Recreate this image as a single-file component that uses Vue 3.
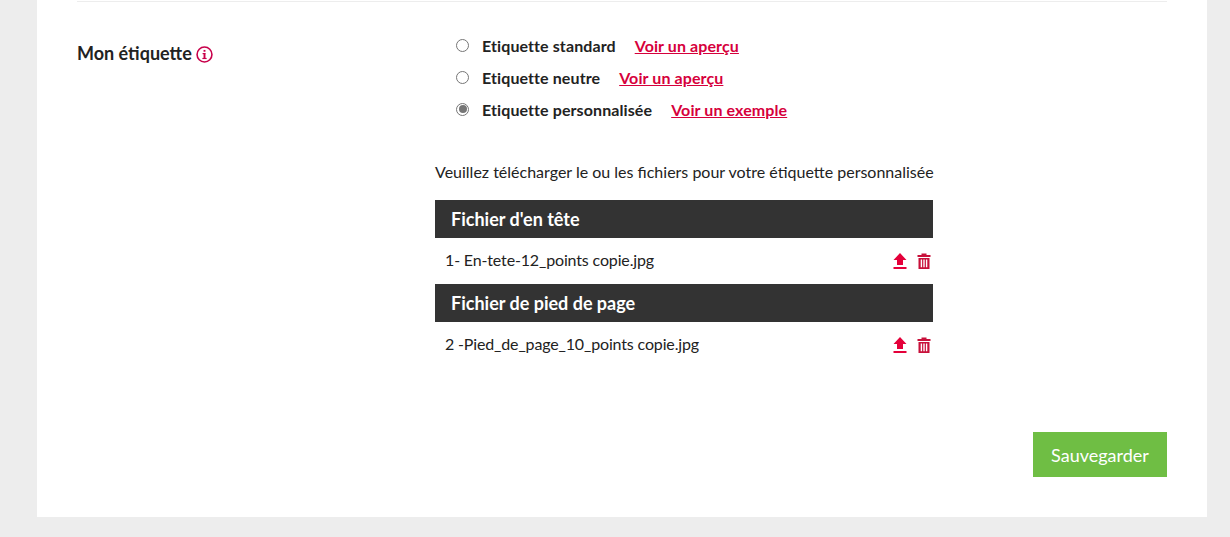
<template>
  <div class="page">
    <div class="card">
      <div class="settings-row">
        <div class="label-col">
          <span class="label-text">Mon étiquette</span>
          <svg class="info-icon" viewBox="0 0 16 16" width="17" height="17">
            <circle cx="8" cy="8" r="7" fill="none" stroke="#c8004b" stroke-width="1.5" />
            <rect x="7.1" y="6.8" width="1.8" height="5" fill="#c8004b" />
            <rect x="6.2" y="6.6" width="2.7" height="1.1" fill="#c8004b" />
            <rect x="6" y="11.2" width="4" height="1.1" fill="#c8004b" />
            <rect x="7.1" y="3.7" width="1.8" height="1.7" fill="#c8004b" />
          </svg>
        </div>
        <div class="content-col">
          <div class="options">
            <label v-for="option in options" :key="option.name" class="option">
              <span class="radio" :class="{ checked: option.checked }"></span>
              <span class="option-name">{{ option.name }}</span>
              <a class="option-link" href="#">{{ option.link }}</a>
            </label>
          </div>
          <p class="hint">Veuillez télécharger le ou les fichiers pour votre étiquette personnalisée</p>
          <div class="files">
            <div v-for="file in files" :key="file.title" class="file-block">
              <div class="file-title">{{ file.title }}</div>
              <div class="file-row">
                <span class="file-name">{{ file.name }}</span>
                <div class="file-actions">
                  <svg viewBox="0 0 16 16" width="16" height="16">
                    <path d="M8 0 L14.5 7 H11 V12 H5 V7 H1.5 Z" fill="#e4003a" />
                    <rect x="1.5" y="14" width="13" height="2" fill="#e4003a" />
                  </svg>
                  <svg viewBox="0 0 16 16" width="16" height="16">
                    <path d="M5.5 0.5 H10.5 V2 H14.5 V4 H1.5 V2 H5.5 Z" fill="#c8103a" />
                    <path fill-rule="evenodd" d="M2.5 5 H13.5 V16 H2.5 Z M4.7 6.5 V14.2 H6.1 V6.5 Z M7.3 6.5 V14.2 H8.7 V6.5 Z M9.9 6.5 V14.2 H11.3 V6.5 Z" fill="#c8103a" />
                  </svg>
                </div>
              </div>
            </div>
          </div>
        </div>
      </div>
      <div class="footer">
        <button class="save-btn" type="button">Sauvegarder</button>
      </div>
    </div>
  </div>
</template>

<script setup>
const options = [
  { name: 'Etiquette standard', link: 'Voir un aperçu' },
  { name: 'Etiquette neutre', link: 'Voir un aperçu' },
  { name: 'Etiquette personnalisée', link: 'Voir un exemple', checked: true }
]

const files = [
  { title: "Fichier d'en tête", name: '1- En-tete-12_points copie.jpg' },
  { title: 'Fichier de pied de page', name: '2 -Pied_de_page_10_points copie.jpg' }
]
</script>

<style>
html,
body {
  margin: 0;
  background: #ededed;
}
</style>

<style scoped>
.page {
  height: 537px;
  padding: 0 23px 20px 37px;
  box-sizing: border-box;
  font-family: Lato, "Open Sans", sans-serif;
  color: #222222;
  overflow: hidden;
}

.card {
  height: 517px;
  background: #ffffff;
  padding: 1px 40px 0;
  box-sizing: border-box;
}

.settings-row {
  display: flex;
  border-top: 1px solid #ededed;
  padding-top: 27px;
}

.label-col {
  width: 358px;
  flex-shrink: 0;
  display: flex;
  align-items: center;
  gap: 4px;
  height: 46px;
  margin-top: 1px;
}

.label-text {
  font-size: 18px;
  font-weight: 700;
  line-height: 46px;
}

.info-icon {
  margin-top: 2px;
}

.content-col {
  width: 498px;
}

.options {
  display: flex;
  flex-direction: column;
  padding-left: 21px;
}

.option {
  display: flex;
  align-items: center;
  height: 32px;
  font-size: 16px;
  letter-spacing: 0.1px;
}

.radio {
  width: 13px;
  height: 13px;
  border: 1px solid #767676;
  border-radius: 50%;
  box-sizing: border-box;
  margin-right: 13px;
  background: #ffffff;
  position: relative;
}

.radio.checked::after {
  content: "";
  position: absolute;
  left: 1.5px;
  top: 1.5px;
  width: 8px;
  height: 8px;
  border-radius: 50%;
  background: #767676;
}

.option-name {
  font-weight: 700;
  margin-right: 19px;
}

.option-link {
  color: #d6003c;
  font-weight: 700;
  text-decoration: underline;
}

.hint {
  margin: 36px 0 0;
  font-size: 16px;
  line-height: 22px;
  white-space: nowrap;
}

.files {
  margin-top: 17px;
}

.file-title {
  height: 38px;
  line-height: 38px;
  background: #333333;
  color: #ffffff;
  font-size: 18px;
  font-weight: 700;
  padding-left: 16px;
}

.file-row {
  display: flex;
  justify-content: space-between;
  align-items: center;
  height: 46px;
  box-sizing: border-box;
  padding: 0 1px 4px 10px;
  font-size: 16px;
  letter-spacing: -0.15px;
}

.file-actions {
  display: flex;
  gap: 8px;
  margin-top: 3px;
}

.footer {
  display: flex;
  justify-content: flex-end;
  margin-top: 64px;
}

.save-btn {
  width: 134px;
  height: 45px;
  border: none;
  background: #6fbe44;
  color: #ffffff;
  font-family: inherit;
  font-size: 18px;
}
</style>
